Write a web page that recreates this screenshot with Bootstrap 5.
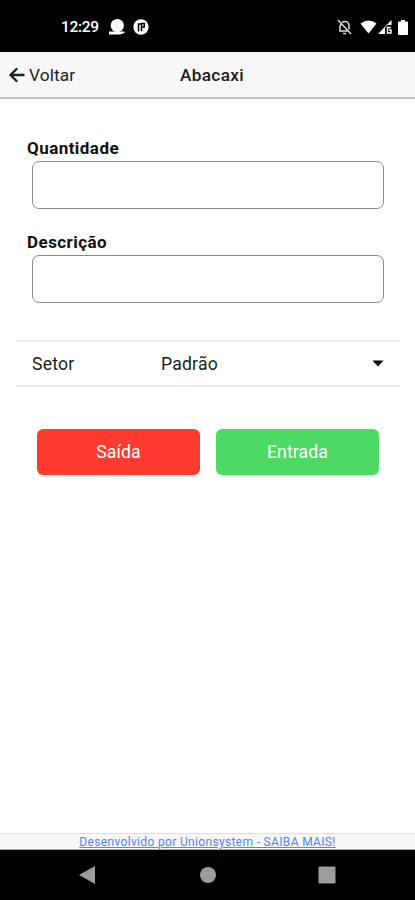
<!DOCTYPE html>
<html lang="pt-BR">
<head>
<meta charset="utf-8">
<meta name="viewport" content="width=device-width, initial-scale=1">
<title>Abacaxi</title>
<link href="https://cdn.jsdelivr.net/npm/bootstrap@5.3.0/dist/css/bootstrap.min.css" rel="stylesheet">
<style>
body{font-family:Roboto,"Liberation Sans",sans-serif;color:#1c1c1c;font-size:17.3px;line-height:24px}
.screen{height:900px;overflow:hidden}
.statusbar{height:52px;padding:2px 7px 0 61px}
.clock{font-size:15.5px;font-weight:500;width:48px;letter-spacing:-.3px}
.icon-wifi{margin-left:8px}
.icon-signal{margin-left:1px}
.icon-battery{margin-left:5px}
.topbar{height:47px;background:#f7f7f7;border-bottom:2px solid #c4c4c4;display:grid;grid-template-columns:1fr auto 1fr;padding:1px 0 0 9px}
.topbar h1{font-size:17.3px;font-weight:500;letter-spacing:.3px;line-height:24px}
.back{color:#222;gap:4px;font-size:17.3px;letter-spacing:.1px}
.fields{padding:37px 31px 0 27px}
.fields label{font-weight:700;font-size:17px;letter-spacing:.45px;line-height:24px;padding-bottom:1px;color:#111}
.fields .form-control{height:48px;margin-left:5px;width:352px;border:1px solid #8a8a8a;border-radius:7px}
.field-next{margin-top:21px}
.sector{margin:37px 15px 0 16px;height:47px;border-top:2px solid #ececec;border-bottom:2px solid #ececec;padding:0 16px;font-size:17.6px;letter-spacing:.2px}
.sector .name{width:129px}
.actions{padding:42px 36px 0 37px;gap:16px}
.actions .btn{height:46px;border-radius:6px;font-size:17.7px;letter-spacing:.1px;color:#fff;padding:0 0 1px;line-height:44px;border:0}
.btn-out,.btn-out:hover{background:#ff3b30}
.btn-in,.btn-in:hover{background:#4cd964}
.credit{height:17px;background:#f7f7f7;border-top:1px solid #dedede;font-size:12px;line-height:16px;border-bottom:1px solid #aaa}
.credit a{color:#4d86f0;letter-spacing:.34px}
.navkeys{height:50px;padding:0 79px}
</style>
<script src="https://cdn.jsdelivr.net/npm/bootstrap@5.3.0/dist/js/bootstrap.bundle.min.js"></script>
</head>
<body>
<div class="screen d-flex flex-column bg-white">
  <div class="statusbar bg-black text-white d-flex align-items-center flex-shrink-0">
    <span class="clock">12:29</span>
    <svg width="16" height="18" viewBox="0 0 16 18" fill="#fff"><circle cx="8.300" cy="7.500" r="6.600"/><path d="M0 13.500h15.500v1.500L11 16.500H0z"/></svg>
    <svg class="ms-2" width="16" height="16" viewBox="0 0 16 16"><circle cx="8" cy="8" r="7.700" fill="#fff"/><path d="M5.500 12.500V5H8M8.500 12V4.500h2.800V8H9" fill="none" stroke="#000" stroke-width="1.500"/></svg>
    <svg class="ms-auto" width="15" height="16" viewBox="0 0 15 16" fill="none" stroke="#ddd" stroke-width="1.500"><path d="M5 3.500c4-2.500 7 0 7 3v4M3 12V7.500L4 5M2 12h9M1 1l13 14M6 14.500h3"/></svg>
    <svg class="icon-wifi" width="17" height="14" viewBox="0 0 17 14" fill="#fff"><path d="M.5 3.500Q8.500-2.500 16.500 3.500L8.500 13.500z"/></svg>
    <svg class="icon-signal" width="15" height="14" viewBox="0 0 15 14"><path d="M0 14 13.500 0v5H9.500L7 8v6z" fill="#fff"/><path d="M13 7.500H9.500V13H13v-3h-2" fill="none" stroke="#fff" stroke-width="1.400"/></svg>
    <svg class="icon-battery" width="10" height="15" viewBox="0 0 10 15" fill="#fff"><path d="M3 0h4v1.500h2q1 0 1 1V14q0 1-1 1H1q-1 0-1-1V2.500q0-1 1-1h2z"/></svg>
  </div>
  <header class="topbar align-items-center flex-shrink-0">
    <a href="#" class="back d-flex align-items-center text-decoration-none">
      <svg width="16" height="16" viewBox="0 0 16 16" fill="none" stroke="#222" stroke-width="2.400" stroke-linejoin="round" stroke-linecap="round"><path d="M7.500 2 1.500 8l6 6M1.500 8h13"/></svg>
      <span>Voltar</span>
    </a>
    <h1 class="m-0">Abacaxi</h1>
  </header>
  <main class="flex-grow-1">
    <div class="fields">
      <div>
        <label for="qtd" class="d-block">Quantidade</label>
        <input id="qtd" class="form-control">
      </div>
      <div class="field-next">
        <label for="desc" class="d-block">Descrição</label>
        <input id="desc" class="form-control">
      </div>
    </div>
    <div class="sector d-flex align-items-center">
      <span class="name">Setor</span>
      <span>Padrão</span>
      <svg class="ms-auto" width="12" height="7" viewBox="0 0 12 7"><path d="M.5.5h11L6 6.500z"/></svg>
    </div>
    <div class="actions d-flex">
      <button class="btn btn-out flex-fill w-50">Saída</button>
      <button class="btn btn-in flex-fill w-50">Entrada</button>
    </div>
  </main>
  <footer class="credit text-center flex-shrink-0"><a href="#">Desenvolvido por Unionsystem - SAIBA MAIS!</a></footer>
  <div class="navkeys bg-black d-flex align-items-center justify-content-between flex-shrink-0">
    <svg width="17" height="18" viewBox="0 0 17 18" fill="#9c9c9c"><path d="M16 0v18L0 9z"/></svg>
    <svg width="17" height="16" viewBox="0 0 17 16" fill="#9c9c9c"><circle cx="9" cy="8" r="8"/></svg>
    <svg width="18" height="18" viewBox="0 0 18 18" fill="#9c9c9c"><rect x=".5" y=".5" width="17" height="17" rx="1"/></svg>
  </div>
</div>
</body>
</html>
